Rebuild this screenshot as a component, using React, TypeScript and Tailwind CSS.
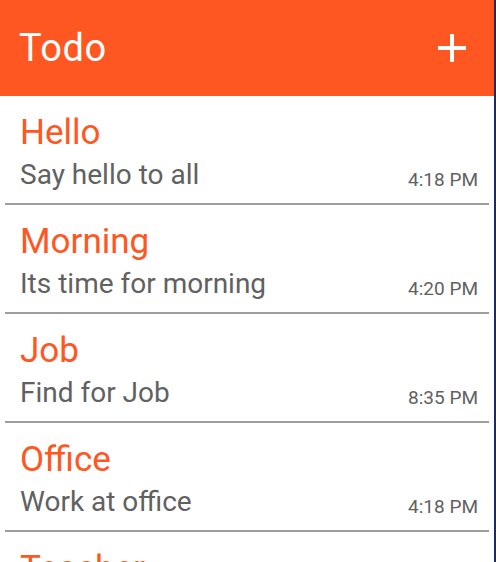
import React from 'react';

interface Todo {
  title: string;
  note: string;
  time: string;
}

const TODOS: Todo[] = [
  { title: 'Hello', note: 'Say hello to all', time: '4:18 PM' },
  { title: 'Morning', note: 'Its time for morning', time: '4:20 PM' },
  { title: 'Job', note: 'Find for Job', time: '8:35 PM' },
  { title: 'Office', note: 'Work at office', time: '4:18 PM' },
  { title: 'Teacher', note: 'Meet the teacher', time: '9:10 PM' },
];

function PlusIcon() {
  return (
    <svg width="28" height="28" viewBox="0 0 28 28" fill="none">
      <rect x="12" y="0" width="4" height="28" fill="white" />
      <rect x="0" y="12" width="28" height="4" fill="white" />
    </svg>
  );
}

export default function App() {
  return (
    <div
      className="h-[562px] w-[496px] overflow-hidden bg-white border-r-2 border-[#1b2a6b] flex flex-col"
      style={{ fontFamily: 'Roboto, "Liberation Sans", sans-serif' }}
    >
      {/* app bar */}
      <div className="h-[96px] shrink-0 bg-[#ff5722] flex items-center justify-between pl-[19px] pr-[28px]">
        <h1 className="text-white text-[38px] leading-none font-normal tracking-[0.5px]">Todo</h1>
        <PlusIcon />
      </div>

      {/* list */}
      <div className="flex flex-col pl-[5px] pr-[5px]">
        {TODOS.map((t, i) => (
          <div key={i} className="h-[109px] shrink-0 border-b-2 border-[#9e9e9e] flex flex-col pl-[15px] pr-[11px] pt-[19px]">
            <div className="text-[#ff5722] text-[35px] leading-[35px]">{t.title}</div>
            <div className="flex items-end justify-between mt-[9px]">
              <span className="text-[#616161] text-[28px] leading-[32px]">{t.note}</span>
              <span className="text-[#616161] text-[19px] leading-[24px] mb-[-1px]">{t.time}</span>
            </div>
          </div>
        ))}
      </div>
    </div>
  );
}
